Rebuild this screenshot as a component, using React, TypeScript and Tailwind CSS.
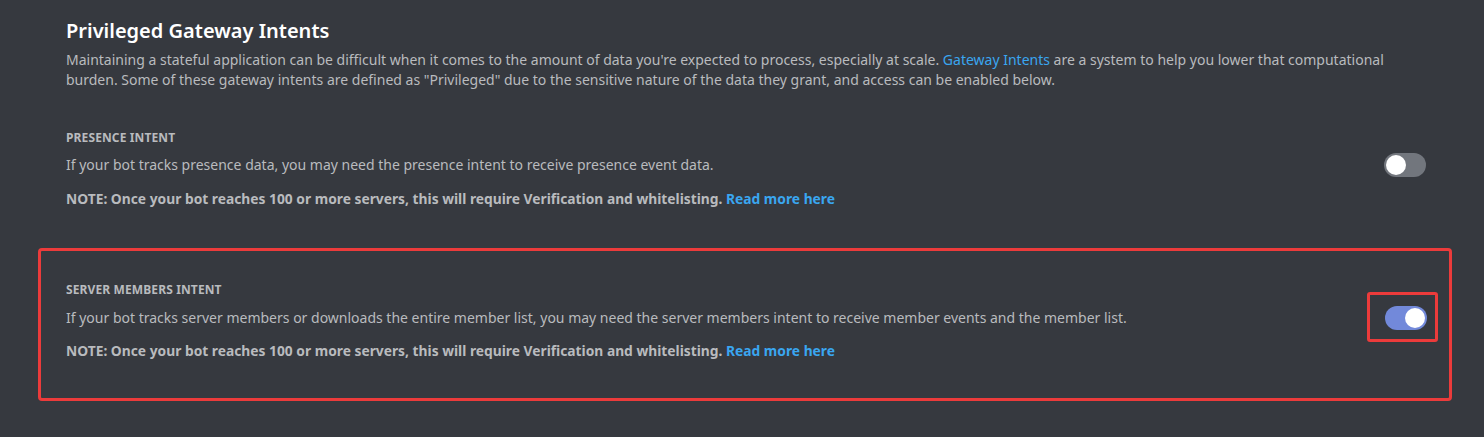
import React from "react";

const font = { fontFamily: '"Noto Sans", "Open Sans", sans-serif' };

function Toggle({ on }: { on: boolean }) {
  return (
    <div
      className={`w-[42px] h-[24px] rounded-full flex items-center px-[2px] ${
        on ? "bg-[#7289da] justify-end" : "bg-[#72767d] justify-start"
      }`}
    >
      <div className="w-[20px] h-[20px] rounded-full bg-white" />
    </div>
  );
}

function Intent({
  label,
  text,
  on,
  highlight,
  bodyGap,
  noteGap,
}: {
  label: string;
  text: string;
  on: boolean;
  highlight?: boolean;
  bodyGap: string;
  noteGap: string;
}) {
  return (
    <div>
      <div className="text-[12px] leading-[16px] font-bold uppercase text-[#b9bbbe] tracking-[0.01em]">
        {label}
      </div>
      <div className={`${bodyGap} flex items-center`}>
        <div className="flex-1 text-[14px] leading-[20px] text-[#b9bbbe]">{text}</div>
        <div className="relative">
          {highlight && (
            <div className="absolute -left-[18px] -right-[11px] -top-[14px] -bottom-[12px] border-[3px] border-[#ec3b3b] rounded-[3px]" />
          )}
          <Toggle on={on} />
        </div>
      </div>
      <div className={`${noteGap} text-[13.8px] leading-[20px] font-bold text-[#b9bbbe]`}>
        NOTE: Once your bot reaches 100 or more servers, this will require Verification and
        whitelisting. <a className="text-[#3aa6f0]">Read more here</a>
      </div>
    </div>
  );
}

export default function App() {
  return (
    <div className="w-[1484px] h-[437px] bg-[#36393f]" style={font}>
      <div className="pl-[66px] pr-[58px] pt-[17px]">
        <h2 className="text-[20px] leading-[28px] font-semibold text-white">
          Privileged Gateway Intents
        </h2>
        <p className="mt-[5px] text-[14px] leading-[20px] text-[#b9bbbe]">
          Maintaining a stateful application can be difficult when it comes to the amount of data
          you're expected to process, especially at scale.{" "}
          <a className="text-[#3aa6f0]">Gateway Intents</a> are a system to help you lower that
          computational burden. Some of these gateway intents are defined as "Privileged" due to the
          sensitive nature of the data they grant, and access can be enabled below.
        </p>
        <div className="mt-[40px]">
          <Intent
            label="Presence Intent"
            text="If your bot tracks presence data, you may need the presence intent to receive presence event data."
            on={false}
            bodyGap="mt-[7px]"
            noteGap="mt-[12px]"
          />
        </div>
      </div>
      <div className="mt-[39px] ml-[38px] w-[1414px] border-[3px] border-[#ec3b3b] rounded-[4px] pl-[25px] pr-[22px] pt-[31px] pb-[37px]">
        <Intent
          label="Server Members Intent"
          text="If your bot tracks server members or downloads the entire member list, you may need the server members intent to receive member events and the member list."
          on={true}
          highlight
          bodyGap="mt-[8px]"
          noteGap="mt-[11px]"
        />
      </div>
    </div>
  );
}
